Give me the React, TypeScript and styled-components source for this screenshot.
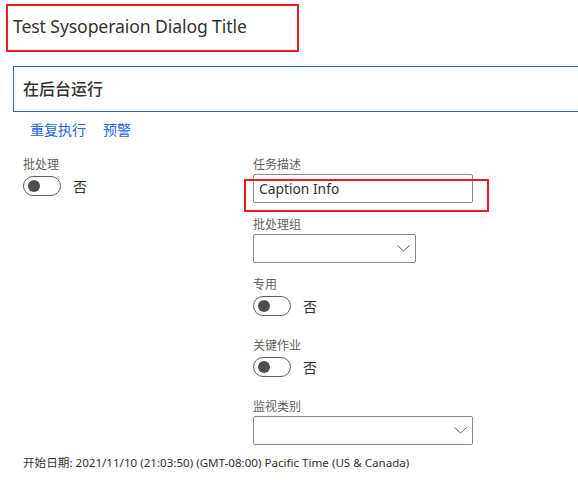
import React from "react";
import styled, { createGlobalStyle } from "styled-components";

const GlobalStyle = createGlobalStyle`
  html, body {
    margin: 0;
    padding: 0;
    background: #fff;
    overflow: hidden;
  }
  body {
    font-family: "Noto Sans", "Noto Sans CJK SC", sans-serif;
    color: #323130;
  }
`;

const Page = styled.div`
  width: 578px;
  height: 480px;
  overflow: hidden;
  padding-top: 4px;
  box-sizing: border-box;
`;

const TitleBox = styled.div`
  margin-left: 6px;
  width: 293px;
  height: 48px;
  box-sizing: border-box;
  border: 2px solid #e81c24;
  padding: 0 0 4px 5px;
  display: flex;
  align-items: center;
  font-size: 17.6px;
  color: #323130;
  letter-spacing: -0.1px;
`;

const Section = styled.div`
  margin: 14px -10px 0 13px;
  height: 46px;
  box-sizing: border-box;
  border: 1px solid #2564d8;
  padding: 0 0 3px 9px;
  display: flex;
  align-items: center;
  font-size: 16px;
  font-weight: 500;
`;

const ActionBar = styled.div`
  display: flex;
  gap: 17px;
  padding-left: 30px;
  height: 34px;
  align-items: center;
`;

const ActionLink = styled.a`
  font-size: 14px;
  color: #2266e3;
  text-decoration: none;
  cursor: pointer;
`;

const Form = styled.div`
  display: grid;
  grid-template-columns: 230px 1fr;
  padding: 10px 0 0 23px;
`;

const Column = styled.div`
  display: flex;
  flex-direction: column;
`;

const Field = styled.div`
  position: relative;
  display: flex;
  flex-direction: column;
  align-items: flex-start;
  margin-bottom: 13px;
`;

const Label = styled.label`
  font-size: 12px;
  line-height: 17px;
  color: #605e5c;
  margin-bottom: 1px;
`;

const Input = styled.div<{ $width: number }>`
  width: ${(p) => p.$width}px;
  height: 29px;
  box-sizing: border-box;
  border: 1px solid #8a8886;
  border-radius: 2px;
  padding: 0 5px;
  display: flex;
  align-items: center;
  justify-content: space-between;
  font-size: 13.8px;
  color: #323130;
`;

const Highlight = styled.div`
  position: absolute;
  left: -9px;
  top: 23px;
  width: 245px;
  height: 33px;
  box-sizing: border-box;
  border: 2px solid #e81c24;
  pointer-events: none;
`;

const ToggleRow = styled.div`
  display: flex;
  align-items: center;
  gap: 12px;
  height: 30px;
  padding-bottom: 6px;
  box-sizing: border-box;
  font-size: 14px;
`;

const Track = styled.span`
  width: 38px;
  height: 20px;
  box-sizing: border-box;
  border: 1px solid #605e5c;
  border-radius: 10px;
  display: flex;
  align-items: center;
  padding-left: 4px;
`;

const Knob = styled.span`
  width: 12px;
  height: 12px;
  border-radius: 50%;
  background: #4f4e4d;
`;

const Footer = styled.div`
  font-size: 11.6px;
  color: #323130;
  padding: 0 0 0 23px;
  margin-top: -4px;
`;

const Chevron = () => (
  <svg width="13" height="7" viewBox="0 0 13 7">
    <path d="M0.5 0.5 L6.5 6 L12.5 0.5" fill="none" stroke="#605e5c" strokeWidth="1" />
  </svg>
);

const Toggle = ({ label }: { label: string }) => (
  <Field>
    <Label>{label}</Label>
    <ToggleRow>
      <Track>
        <Knob />
      </Track>
      否
    </ToggleRow>
  </Field>
);

const Select = ({ label, width }: { label: string; width: number }) => (
  <Field>
    <Label>{label}</Label>
    <Input $width={width}>
      <span />
      <Chevron />
    </Input>
  </Field>
);

export default function App() {
  return (
    <Page>
      <GlobalStyle />
      <TitleBox>Test Sysoperaion Dialog Title</TitleBox>
      <Section>在后台运行</Section>
      <ActionBar>
        <ActionLink>重复执行</ActionLink>
        <ActionLink>预警</ActionLink>
      </ActionBar>
      <Form>
        <Column>
          <Toggle label="批处理" />
        </Column>
        <Column>
          <Field>
            <Label>任务描述</Label>
            <Input $width={220}>Caption Info</Input>
            <Highlight />
          </Field>
          <Select label="批处理组" width={163} />
          <Toggle label="专用" />
          <Toggle label="关键作业" />
          <Select label="监视类别" width={220} />
        </Column>
      </Form>
      <Footer>开始日期: 2021/11/10 (21:03:50) (GMT-08:00) Pacific Time (US &amp; Canada)</Footer>
    </Page>
  );
}
